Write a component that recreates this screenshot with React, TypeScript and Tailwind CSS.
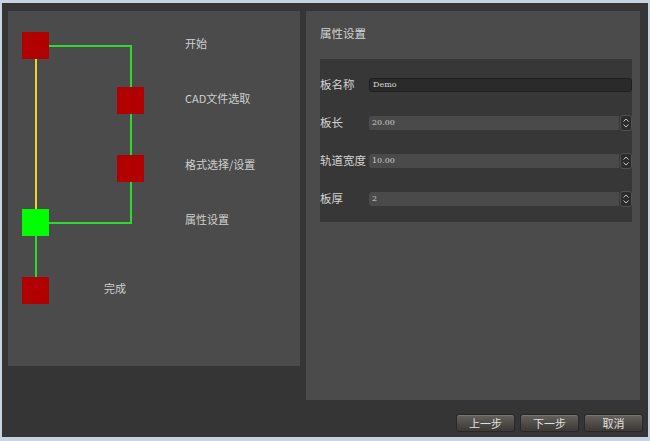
import React from "react";

const font = { fontFamily: '"Noto Sans CJK SC", "Noto Sans", sans-serif' };

function Spin({ value }: { value: string }) {
  return (
    <div className="flex h-[14px] flex-1 items-center gap-[1px]">
      <div className="flex h-[14px] flex-1 items-center rounded-l-[3px] bg-[#4a4a4a] pl-[3px] text-[8px] text-[#cfcfcf]" style={{ fontFamily: '"DejaVu Serif", serif' }}>
        {value}
      </div>
      <div className="flex h-[16px] w-[12px] items-center justify-center rounded-[3px] border border-[#505050] bg-[#2c2c2c]">
        <svg width="8" height="12" viewBox="0 0 8 12">
          <path d="M1.5 4.5 L4 2 L6.5 4.5" fill="none" stroke="#c4c4c4" strokeWidth="1" />
          <path d="M1.5 7.5 L4 10 L6.5 7.5" fill="none" stroke="#c4c4c4" strokeWidth="1" />
        </svg>
      </div>
    </div>
  );
}

function Row({ label, children }: { label: string; children: React.ReactNode }) {
  return (
    <div className="flex h-[14px] items-center">
      <div className="w-[49px] shrink-0 text-[11.5px] leading-none text-[#d4d4d4]">{label}</div>
      {children}
    </div>
  );
}

function Btn({ children }: { children: React.ReactNode }) {
  return (
    <div className="flex h-[18px] w-[59px] items-center justify-center rounded-[3px] border border-[#2a2826] bg-gradient-to-b from-[#67625d] to-[#3b3835] text-[11px] leading-none text-[#e0e0e0] shadow-[inset_0_1px_0_#7a756f]">
      {children}
    </div>
  );
}

export default function App() {
  return (
    <div className="h-[441px] w-[650px] bg-[#c7d5e2] pt-[3px] pb-[4px] pl-[2px] pr-[2px]" style={font}>
      <div className="flex h-full flex-col bg-[#353535] pl-[6px] pr-[8px] pt-[8px]">
        <div className="flex items-start gap-[6px]">
          {/* left panel */}
          <div className="relative h-[355px] w-[292px] bg-[#4b4b4b]">
            <svg className="absolute left-0 top-0" width="292" height="355">
              <line x1="41" y1="35" x2="124" y2="35" stroke="#2fd82f" strokeWidth="2" />
              <line x1="123" y1="34" x2="123" y2="213" stroke="#2fd82f" strokeWidth="2" />
              <line x1="41" y1="212" x2="124" y2="212" stroke="#2fd82f" strokeWidth="2" />
              <line x1="28" y1="48" x2="28" y2="198" stroke="#e8d42a" strokeWidth="2" />
              <line x1="28" y1="225" x2="28" y2="266" stroke="#2fd82f" strokeWidth="2" />
              <rect x="14" y="21" width="27" height="27" fill="#b10000" />
              <rect x="109" y="76" width="27" height="27" fill="#b10000" />
              <rect x="109" y="144" width="27" height="27" fill="#b10000" />
              <rect x="14" y="198" width="27" height="27" fill="#00ff00" />
              <rect x="14" y="266" width="27" height="27" fill="#b10000" />
            </svg>
            <div className="absolute left-[177px] top-[25px] text-[11px] leading-[14px] text-[#cfcfcf]">开始</div>
            <div className="absolute left-[177px] top-[80px] text-[11px] leading-[14px] text-[#cfcfcf]">CAD文件选取</div>
            <div className="absolute left-[177px] top-[146px] text-[11px] leading-[14px] text-[#cfcfcf]">格式选择/设置</div>
            <div className="absolute left-[177px] top-[201px] text-[11px] leading-[14px] text-[#cfcfcf]">属性设置</div>
            <div className="absolute left-[96px] top-[270px] text-[11px] leading-[14px] text-[#cfcfcf]">完成</div>
          </div>
          {/* right panel */}
          <div className="flex h-[389px] w-[334px] flex-col bg-[#4b4b4b] pl-[14px] pr-[8px]">
            <div className="flex h-[48px] items-center pb-[2px] text-[11.5px] text-[#d4d4d4]">属性设置</div>
            <div className="flex h-[163px] flex-col gap-[24px] bg-[#373737] pt-[19px]">
              <Row label="板名称">
                <div className="flex h-[14px] flex-1 items-center rounded-[3px] border border-[#1f1f1f] bg-[#2a2a2a] pl-[3px] text-[8px] text-[#dcdcdc]" style={{ fontFamily: '"DejaVu Serif", serif' }}>
                  Demo
                </div>
              </Row>
              <Row label="板长">
                <Spin value="20.00" />
              </Row>
              <Row label="轨道宽度">
                <Spin value="10.00" />
              </Row>
              <Row label="板厚">
                <Spin value="2" />
              </Row>
            </div>
          </div>
        </div>
        <div className="mt-[14px] flex justify-end gap-[5px] mr-[-3px]">
          <Btn>上一步</Btn>
          <Btn>下一步</Btn>
          <Btn>取消</Btn>
        </div>
      </div>
    </div>
  );
}
